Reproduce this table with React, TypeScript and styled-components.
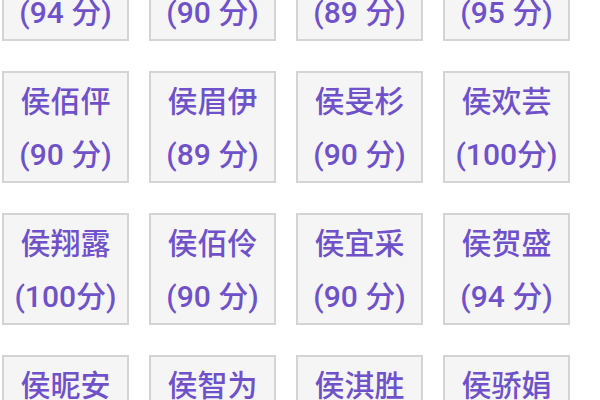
import React from "react";
import styled, { createGlobalStyle } from "styled-components";

const Global = createGlobalStyle`
  html, body { margin: 0; padding: 0; background: #ffffff; overflow: hidden; }
  body { font-family: Roboto, "Noto Sans CJK SC", sans-serif; }
`;

const Grid = styled.div`
  display: grid;
  grid-template-columns: repeat(4, 127px);
  column-gap: 20px;
  row-gap: 30px;
  padding-left: 2px;
  margin-top: -71px;
`;

const Card = styled.div`
  box-sizing: border-box;
  width: 127px;
  height: 112px;
  background: #f5f5f5;
  border: 2px solid #d4d4d4;
  display: flex;
  flex-direction: column;
  align-items: center;
  justify-content: center;
  color: #6f52c9;
  font-size: 30px;
  line-height: 56px;
  font-weight: 500;
`;

const Name = styled.div`
  font-family: "Noto Sans CJK SC", sans-serif;
  font-weight: 500;
  white-space: nowrap;
`;

const Score = styled.div`
  font-family: Roboto, "Noto Sans CJK SC", sans-serif;
  font-weight: 500;
  white-space: nowrap;
`;

const items: [string, string][] = [
  ["侯佳怡", "(94 分)"],
  ["侯子轩", "(90 分)"],
  ["侯雨涵", "(89 分)"],
  ["侯浩然", "(95 分)"],
  ["侯佰伻", "(90 分)"],
  ["侯眉伊", "(89 分)"],
  ["侯旻杉", "(90 分)"],
  ["侯欢芸", "(100分)"],
  ["侯翔露", "(100分)"],
  ["侯佰伶", "(90 分)"],
  ["侯宜采", "(90 分)"],
  ["侯贺盛", "(94 分)"],
  ["侯昵安", "(90 分)"],
  ["侯智为", "(89 分)"],
  ["侯淇胜", "(90 分)"],
  ["侯骄娟", "(94 分)"],
];

export default function App() {
  return (
    <>
      <Global />
      <Grid>
        {items.map(([n, s], i) => (
          <Card key={i}>
            <Name>{n}</Name>
            <Score>{s}</Score>
          </Card>
        ))}
      </Grid>
    </>
  );
}
